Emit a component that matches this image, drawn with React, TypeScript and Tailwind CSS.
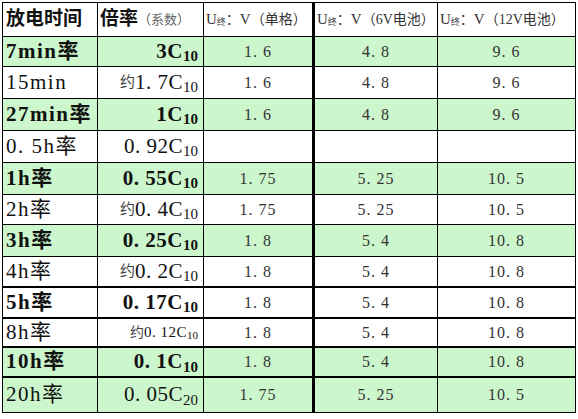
import React from "react";

type Rate = { pre?: string; main: string; sub: string; small?: boolean };
type Row = {
  label: string;
  rate: Rate;
  bold: boolean;
  green: boolean;
  h: string;
  thickTop?: boolean;
  v: [string, string, string];
};

const ROWS: Row[] = [
  { label: "7min率", rate: { main: "3C", sub: "10" }, bold: true, green: true, h: "h-[30px]", v: ["1.6", "4.8", "9.6"] },
  { label: "15min", rate: { pre: "约", main: "1.7C", sub: "10" }, bold: false, green: false, h: "h-[32px]", v: ["1.6", "4.8", "9.6"] },
  { label: "27min率", rate: { main: "1C", sub: "10" }, bold: true, green: true, h: "h-[32px]", v: ["1.6", "4.8", "9.6"] },
  { label: "0.5h率", rate: { main: "0.92C", sub: "10" }, bold: false, green: false, h: "h-[32px]", v: ["", "", ""] },
  { label: "1h率", rate: { main: "0.55C", sub: "10" }, bold: true, green: true, h: "h-[32px]", v: ["1.75", "5.25", "10.5"] },
  { label: "2h率", rate: { pre: "约", main: "0.4C", sub: "10" }, bold: false, green: false, h: "h-[30px]", v: ["1.75", "5.25", "10.5"] },
  { label: "3h率", rate: { main: "0.25C", sub: "10" }, bold: true, green: true, h: "h-[32px]", v: ["1.8", "5.4", "10.8"] },
  { label: "4h率", rate: { pre: "约", main: "0.2C", sub: "10" }, bold: false, green: false, h: "h-[30px]", v: ["1.8", "5.4", "10.8"] },
  { label: "5h率", rate: { main: "0.17C", sub: "10" }, bold: true, green: false, h: "h-[32px]", thickTop: true, v: ["1.8", "5.4", "10.8"] },
  { label: "8h率", rate: { pre: "约", main: "0.12C", sub: "10", small: true }, bold: false, green: false, h: "h-[30px]", thickTop: true, v: ["1.8", "5.4", "10.8"] },
  { label: "10h率", rate: { main: "0.1C", sub: "10" }, bold: true, green: true, h: "h-[31px]", thickTop: true, v: ["1.8", "5.4", "10.8"] },
  { label: "20h率", rate: { main: "0.05C", sub: "20" }, bold: false, green: true, h: "h-[37px]", thickTop: true, v: ["1.75", "5.25", "10.5"] },
];

const FONT = "font-['Liberation_Serif','Noto_Sans_CJK_SC',serif]";

// "1.6" -> "1. 6": the sheet's font leaves a gap after the point
const spaced = (s: string) => s.replace(".", ". ");

function VoltHead({ tail }: { tail: string }) {
  return (
    <div className="flex h-full items-center pl-[2px] whitespace-nowrap text-[14px] text-[#333]">
      <span className="text-[15px]">U</span>
      <span className="relative top-[3px] text-[9px]">终</span>
      <span>：</span>
      <span className="text-[15px]">V</span>
      <span>（{tail}）</span>
    </div>
  );
}

export default function App() {
  return (
    <div className={`min-h-screen bg-white pl-[2px] pt-[2px] ${FONT}`}>
      <div className="w-[574px] border-l border-t border-black">
        {/* Header */}
        <div className="flex h-[34px] border-b border-black bg-white">
          <div className="flex w-[95px] shrink-0 items-center border-r border-black pl-[3px] text-[19px] font-bold text-[#111]">
            放电时间
          </div>
          <div className="flex w-[106px] shrink-0 items-center border-r border-black pl-[2px]">
            <span className="text-[19px] font-bold text-[#111]">倍率</span>
            <span className="text-[13px] text-[#666]">（系数）</span>
          </div>
          <div className="w-[111px] shrink-0 border-r-[3px] border-black">
            <VoltHead tail="单格" />
          </div>
          <div className="w-[123px] shrink-0 border-r border-black">
            <VoltHead tail="6V电池" />
          </div>
          <div className="w-[138px] shrink-0 border-r border-black">
            <VoltHead tail="12V电池" />
          </div>
        </div>

        {ROWS.map((r) => (
          <div
            key={r.label}
            className={`flex ${r.h} border-b border-black ${r.thickTop ? "border-t-2 -mt-px" : ""} ${
              r.green ? "bg-[#ccf6cc]" : "bg-white"
            }`}
          >
            <div
              className={`flex w-[95px] shrink-0 items-center border-r border-black pl-[3px] text-[21px] tracking-[1.5px] text-[#111] ${
                r.bold ? "font-bold" : ""
              }`}
            >
              {spaced(r.label)}
            </div>
            <div
              className={`flex w-[106px] shrink-0 items-center justify-end border-r border-black pr-[5px] text-[#111] ${
                r.bold ? "font-bold" : ""
              }`}
            >
              {r.rate.pre && (
                <span className={`${r.rate.small ? "text-[14px]" : "text-[15px]"} font-normal text-[#444]`}>
                  {r.rate.pre}
                </span>
              )}
              <span className={r.rate.small ? "text-[15px] tracking-[0.5px]" : "text-[21px] tracking-[0.5px]"}>
                {spaced(r.rate.main)}
              </span>
              <span
                className={`relative ${r.rate.small ? "top-[3px] text-[11px]" : "top-[5px] text-[15px]"} leading-none`}
              >
                {r.rate.sub}
              </span>
            </div>
            <div className="flex w-[111px] shrink-0 items-center justify-center border-r-[3px] border-black text-[16px] tracking-[1px] text-[#333]">
              {spaced(r.v[0])}
            </div>
            <div className="flex w-[123px] shrink-0 items-center justify-center border-r border-black text-[16px] tracking-[1px] text-[#333]">
              {spaced(r.v[1])}
            </div>
            <div className="flex w-[138px] shrink-0 items-center justify-center border-r border-black text-[16px] tracking-[1px] text-[#333]">
              {spaced(r.v[2])}
            </div>
          </div>
        ))}
      </div>
    </div>
  );
}
